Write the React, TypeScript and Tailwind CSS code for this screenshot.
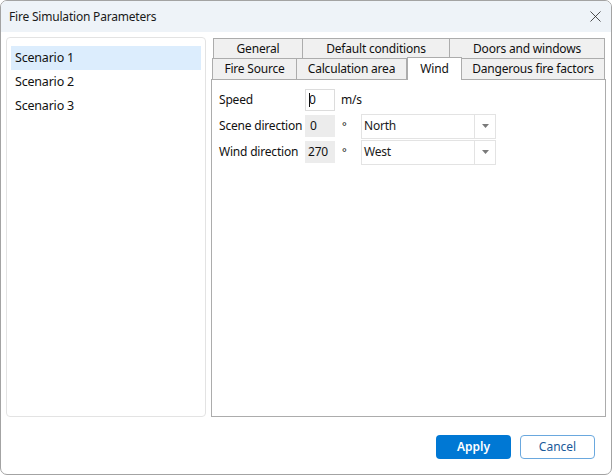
import { X } from 'lucide-react';

const row1 = [
  { label: 'General', w: 'w-[90px]' },
  { label: 'Default conditions', w: 'w-[147px]' },
  { label: 'Doors and windows', w: 'flex-1' },
];

const row2 = [
  { label: 'Fire Source', w: 'w-[85px]', active: false },
  { label: 'Calculation area', w: 'w-[110px]', active: false },
  { label: 'Wind', w: 'w-[55px]', active: true },
  { label: 'Dangerous fire factors', w: 'flex-1', active: false },
];

function Combo({ value }: { value: string }) {
  return (
    <div className="flex h-[25px] w-[135px] border border-[#e3e3e3] bg-white">
      <div className="flex flex-1 items-center pl-[2px] text-[12px] text-[#1a1a1a]">{value}</div>
      <div className="flex w-[21px] items-center justify-center border-l border-[#e3e3e3]">
        <svg width="7" height="4" viewBox="0 0 7 4">
          <path d="M0 0h7L3.5 4z" fill="#7a7a7a" />
        </svg>
      </div>
    </div>
  );
}

export default function App() {
  return (
    <div
      className="flex h-[475px] w-[612px] flex-col overflow-hidden rounded-[7px] border border-[#a3a3a3] bg-white"
      style={{ fontFamily: '"Segoe UI", "Noto Sans", sans-serif' }}
    >
      {/* title bar */}
      <div className="flex h-[31px] shrink-0 items-center justify-between bg-[#eef3f8] pl-[8px] pr-[6px]">
        <span className="text-[12px] tracking-[-0.2px] text-[#1a1a1a]">Fire Simulation Parameters</span>
        <X size={19} strokeWidth={1} className="text-[#222]" />
      </div>

      <div className="flex flex-1 gap-[5px] px-[5px] pt-[5px]">
        {/* scenario list */}
        <div className="h-[380px] w-[200px] rounded-[4px] border border-[#e3e3e3] px-[4px] py-[8px]">
          {['Scenario 1', 'Scenario 2', 'Scenario 3'].map((s, i) => (
            <div
              key={s}
              className={`flex h-[24px] items-center px-[4px] text-[12.5px] tracking-[-0.2px] text-[#111] ${i === 0 ? 'bg-[#dcedfd]' : ''}`}
            >
              {s}
            </div>
          ))}
        </div>

        {/* tabs */}
        <div className="flex h-[380px] w-[395px] flex-col whitespace-nowrap text-[12px] tracking-[-0.2px] text-[#111]">
          <div className="flex h-[21px] pl-[2px] pr-[1px] pt-[1px]">
            {row1.map((t, i) => (
              <div
                key={t.label}
                className={`${t.w} flex items-center justify-center border-t border-r border-[#acacac] bg-[#f0f0f0] ${i === 0 ? 'border-l' : ''}`}
              >
                {t.label}
              </div>
            ))}
          </div>
          <div className="flex h-[21px] items-end pl-[1px] pr-[1px]">
            {row2.map((t, i) => (
              <div
                key={t.label}
                className={`${t.w} flex items-center justify-center border-t border-r border-[#acacac] ${i === 0 ? 'border-l' : ''} ${t.active ? 'relative z-10 -mb-px h-[23px] border-l bg-white' : 'h-[21px] bg-[#f0f0f0]'}`}
              >
                {t.label}
              </div>
            ))}
          </div>
          <div className="flex-1 border border-[#acacac] bg-white pl-[7px] pt-[9px]">
            <div className="flex h-[22px] items-center">
              <span className="w-[86px]">Speed</span>
              <div className="flex h-[22px] w-[30px] items-center border border-[#dcdcdc] pl-[3px]">
                <span className="mr-[-1px] h-[14px] w-px bg-[#111]" />
                0
              </div>
              <span className="ml-[6px]">m/s</span>
            </div>
            <div className="mt-[4px] flex h-[22px] items-center">
              <span className="w-[86px]">Scene direction</span>
              <div className="flex h-[22px] w-[30px] items-center bg-[#ececec] pl-[5px]">0</div>
              <span className="ml-[7px] w-[19px] text-[11px]">°</span>
              <Combo value="North" />
            </div>
            <div className="mt-[4px] flex h-[22px] items-center">
              <span className="w-[86px]">Wind direction</span>
              <div className="flex h-[22px] w-[30px] items-center bg-[#ececec] pl-[3px]">270</div>
              <span className="ml-[7px] w-[19px] text-[11px]">°</span>
              <Combo value="West" />
            </div>
          </div>
        </div>
      </div>

      {/* buttons */}
      <div className="flex h-[59px] shrink-0 items-start justify-end gap-[9px] pr-[16px] pt-[18px]">
        <button className="h-[24px] w-[75px] rounded-[4px] bg-[#0078d4] text-[12px] font-semibold text-white">
          Apply
        </button>
        <button className="h-[24px] w-[75px] rounded-[4px] border border-[#6aa8de] bg-white text-[12px] text-[#1a5a9a]">
          Cancel
        </button>
      </div>
    </div>
  );
}
